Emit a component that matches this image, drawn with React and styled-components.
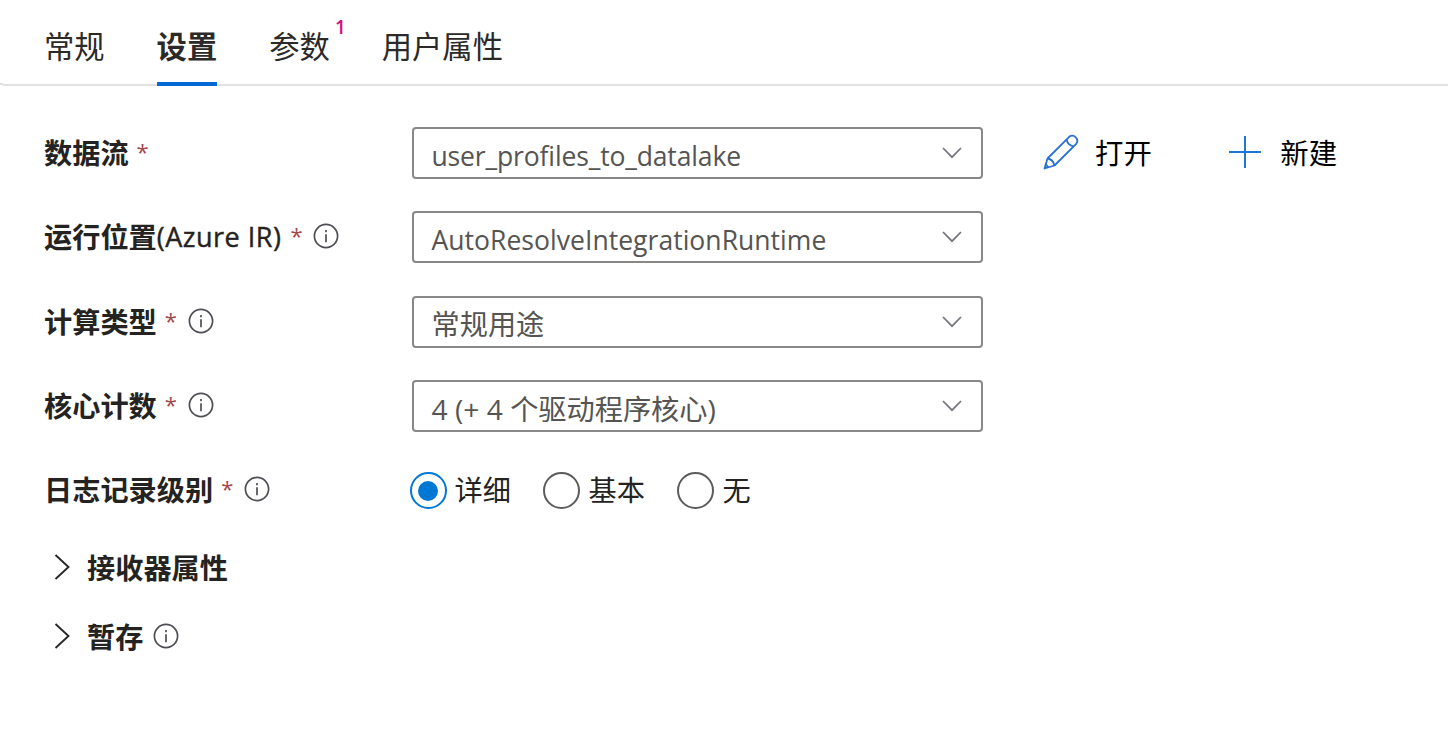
import React, { useState } from "react";
import styled, { createGlobalStyle } from "styled-components";

const GlobalStyle = createGlobalStyle`
  body {
    margin: 0;
    background: #fff;
    color: #242321;
    font-family: "Open Sans", "Noto Sans CJK SC", sans-serif;
  }
  * { box-sizing: border-box; }
`;

const Panel = styled.main`
  width: 1448px;
  height: 752px;
  overflow: hidden;
  background: #fff;
`;

const TabBar = styled.nav`
  display: flex;
  gap: 52px;
  height: 86px;
  padding-left: 44px;
  background:
    linear-gradient(#e1e1e1, #e1e1e1) 3px 84px / 100% 2px no-repeat,
    linear-gradient(#e1e1e1, #e1e1e1) 0 83px / 3px 2px no-repeat;
`;

const Tab = styled.button`
  display: flex;
  position: relative;
  height: 86px;
  padding: 5px 0 0;
  border: 0;
  border-bottom: 4px solid ${(p) => (p.$active ? "#0469d6" : "transparent")};
  background: none;
  color: #2b2a29;
  font-family: "Noto Sans CJK SC", sans-serif;
  font-size: 30.3px;
  line-height: 80px;
  font-weight: ${(p) => (p.$active ? 700 : 400)};
`;

const Count = styled.sup`
  position: absolute;
  top: 17px;
  right: -16px;
  color: #d2107f;
  font: 600 19px/20px "Open Sans", sans-serif;
`;

const Form = styled.section`
  display: flex;
  flex-direction: column;
  padding: 25px 0 0 44px;
`;

const Row = styled.div`
  display: flex;
  align-items: center;
  height: 84.3px;
`;

const Label = styled.div`
  display: flex;
  align-items: center;
  flex: none;
  width: 367.5px;
  font-size: 28px;
  line-height: 40px;
`;

const Strong = styled.span`
  margin-bottom: ${(p) => p.$lift ?? 2}px;
  font-family: "Noto Sans CJK SC", sans-serif;
  font-size: 28.2px;
  line-height: 40px;
  font-weight: 700;
  white-space: nowrap;
`;

const Latin = styled.span`
  margin-right: 1px;
  font-weight: 500;
  font-size: 27px;
  letter-spacing: 0.5px;
  white-space: nowrap;
  -webkit-text-stroke: 0.4px currentColor;
`;

const Star = styled.span`
  width: 14px;
  margin: 0 0 4px 8px;
  color: #a4474c;
  font-size: 22px;
  line-height: 40px;
`;

const InfoSvg = styled.svg`
  flex: none;
  width: 26px;
  height: 26px;
  margin: 0 0 ${(p) => p.$lift}px ${(p) => p.$gap}px;
`;

const Select = styled.button`
  display: flex;
  align-items: center;
  justify-content: space-between;
  width: 571.5px;
  height: 52px;
  padding: 5px 19px 0 18px;
  border: 2px solid #8a8886;
  border-radius: 4px;
  background: #fff;
  color: #555453;
  font-family: "Open Sans", "Noto Sans CJK SC", sans-serif;
  font-size: 28px;
  line-height: 40px;
  text-align: left;
`;

const Value = styled.span`
  font-size: ${(p) => p.$size || 28.2}px;
  letter-spacing: ${(p) => p.$track || 0}px;
  white-space: nowrap;
`;

const ChevronSvg = styled.svg`
  width: 20px;
  height: 12px;
  margin-bottom: 5px;
`;

const Action = styled.button`
  display: flex;
  align-items: center;
  gap: ${(p) => p.$gap}px;
  margin-left: ${(p) => p.$left}px;
  padding: 0;
  border: 0;
  background: none;
  color: #000;
  font: 28.4px/40px "Noto Sans CJK SC", sans-serif;
`;

const ActionText = styled.span`
  margin-bottom: 2px;
`;

const ActionSvg = styled.svg`
  flex: none;
  width: 36px;
  height: 36px;
  margin-bottom: 2px;
`;

const Radios = styled.div`
  display: flex;
  gap: 32.6px;
  margin-left: -2px;
`;

const Radio = styled.button`
  display: flex;
  align-items: center;
  gap: 8px;
  padding: 0;
  border: 0;
  background: none;
  color: #242321;
  font: 28.2px/40px "Noto Sans CJK SC", sans-serif;
`;

const RadioText = styled.span`
  margin-bottom: 2px;
`;

const Dot = styled.span`
  display: grid;
  place-items: center;
  width: 37px;
  height: 37px;
  margin-top: 1px;
  border: 2px solid ${(p) => (p.$on ? "#0078d4" : "#5d5b59")};
  border-radius: 50%;
  &::after {
    content: "";
    width: 20px;
    height: 20px;
    border-radius: 50%;
    background: ${(p) => (p.$on ? "#0078d4" : "transparent")};
  }
`;

const Section = styled.div`
  display: flex;
  align-items: center;
  height: 69px;
  padding-left: 10px;
`;

const ExpandSvg = styled.svg`
  width: 17px;
  height: 26px;
  margin: 1px 16px 0 0;
`;

const Info = ({ gap = 9, lift = 2 }) => (
  <InfoSvg $gap={gap} $lift={lift} viewBox="0 0 26 26" fill="none" stroke="#504e55" strokeWidth="1.7">
    <circle cx="13" cy="13" r="11.6" />
    <path d="M13 11.2v8M13 7v2.2" />
  </InfoSvg>
);

const Chevron = () => (
  <ChevronSvg viewBox="0 0 20 12" fill="none" stroke="#73747c" strokeWidth="1.7">
    <path d="M1 1l9 9.2L19 1" />
  </ChevronSvg>
);

const Expand = () => (
  <ExpandSvg viewBox="0 0 17 26" fill="none" stroke="#282629" strokeWidth="1.9">
    <path d="M1.5 1l13 12-13 12" />
  </ExpandSvg>
);

const Pencil = () => (
  <ActionSvg viewBox="0 0 36 36" fill="none" stroke="#2672d4" strokeWidth="1.8" strokeLinejoin="round">
    <path d="M1.5 34.5l3-10L26.2 2.8a5 5 0 0 1 7 7L11.5 31.5z" />
    <path d="M4.5 24.5c3.5.5 6 3 7 7M23.5 5.5c1 3.8 3 6 7 7M2.7 30.5l2.8 2.8" />
  </ActionSvg>
);

const Plus = () => (
  <ActionSvg viewBox="0 0 36 36" fill="none" stroke="#1b78d6" strokeWidth="2">
    <path d="M2 18h32M18 2v32" />
  </ActionSvg>
);

const fields = [
  { label: "数据流", value: "user_profiles_to_datalake", size: 26.5, track: -0.14, actions: true },
  { label: "运行位置", latin: "(Azure IR)", value: "AutoResolveIntegrationRuntime", size: 26.5, track: 0.04, info: true },
  { label: "计算类型", value: "常规用途", info: true },
  { label: "核心计数", value: "4 (+ 4 个驱动程序核心)", info: true },
];

const FieldLabel = ({ label, latin, info }) => (
  <Label>
    <Strong>{label}</Strong>
    {latin && <Latin>{latin}</Latin>}
    <Star>*</Star>
    {info && <Info />}
  </Label>
);

export default function App() {
  const [level, setLevel] = useState("详细");
  const [tab, setTab] = useState("设置");
  return (
    <Panel>
      <GlobalStyle />
      <TabBar>
        {["常规", "设置", "参数", "用户属性"].map((name) => (
          <Tab key={name} $active={tab === name} onClick={() => setTab(name)}>
            {name}
            {name === "参数" && <Count>1</Count>}
          </Tab>
        ))}
      </TabBar>
      <Form>
        {fields.map((f) => (
          <Row key={f.label}>
            <FieldLabel {...f} />
            <Select>
              <Value $size={f.size} $track={f.track}>{f.value}</Value>
              <Chevron />
            </Select>
            {f.actions && (
              <>
                <Action $left={60} $gap={16}><Pencil /><ActionText>打开</ActionText></Action>
                <Action $left={75.5} $gap={17}><Plus /><ActionText>新建</ActionText></Action>
              </>
            )}
          </Row>
        ))}
        <Row>
          <FieldLabel label="日志记录级别" info />
          <Radios>
            {["详细", "基本", "无"].map((name) => (
              <Radio key={name} onClick={() => setLevel(name)}>
                <Dot $on={level === name} />
                <RadioText>{name}</RadioText>
              </Radio>
            ))}
          </Radios>
        </Row>
        <Section><Expand /><Strong $lift={0}>接收器属性</Strong></Section>
        <Section><Expand /><Strong $lift={0}>暂存</Strong><Info gap={10} lift={0} /></Section>
      </Form>
    </Panel>
  );
}
